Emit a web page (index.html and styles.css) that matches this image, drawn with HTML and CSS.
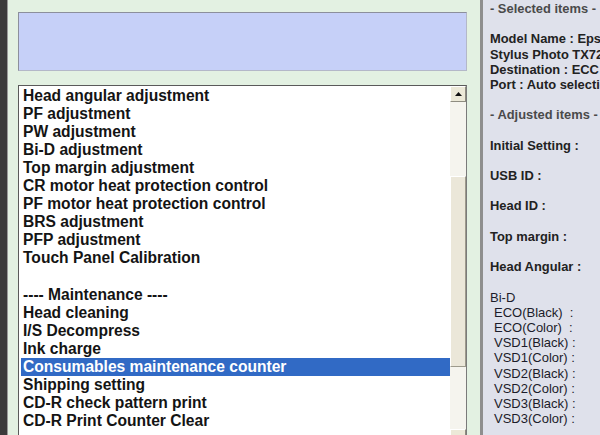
FILE: index.html
```html
<!DOCTYPE html>
<html lang="en">
<head>
    <meta charset="UTF-8">
    <title>Adjustment Program</title>
    <link rel="stylesheet" href="styles.css">
</head>
<body>

<div class="edge"></div>

<!-- Main area: message box + item list -->
<div class="main">
    <div class="message"></div>

    <div class="list">
        <ul class="items">
            <li>Head angular adjustment</li>
            <li>PF adjustment</li>
            <li>PW adjustment</li>
            <li>Bi-D adjustment</li>
            <li>Top margin adjustment</li>
            <li>CR motor heat protection control</li>
            <li>PF motor heat protection control</li>
            <li>BRS adjustment</li>
            <li>PFP adjustment</li>
            <li>Touch Panel Calibration</li>
            <li>&nbsp;</li>
            <li>---- Maintenance ----</li>
            <li>Head cleaning</li>
            <li>I/S Decompress</li>
            <li>Ink charge</li>
            <li class="selected">Consumables maintenance counter</li>
            <li>Shipping setting</li>
            <li>CD-R check pattern print</li>
            <li>CD-R Print Counter Clear</li>
        </ul>
        <div class="scrollbar">
            <div class="scroll-btn">
                <svg width="7" height="4" viewBox="0 0 7 4"><path d="M0 4 L3.5 0 L7 4 Z" fill="#111"/></svg>
            </div>
            <div class="track" style="height: 74px;"></div>
            <div class="thumb" style="height: 191px;"></div>
            <div class="track" style="height: 62px;"></div>
            <div class="scroll-btn"></div>
        </div>
    </div>
</div>

<!-- Right info panel -->
<div class="info">
    <p class="head">- Selected items -</p>
    <p class="gap">Model Name : Eps</p>
    <p>Stylus Photo TX72</p>
    <p>Destination : ECC</p>
    <p>Port : Auto selectio</p>

    <p class="head gap">- Adjusted items -</p>
    <p class="gap">Initial Setting :</p>
    <p class="gap">USB ID :</p>
    <p class="gap">Head ID :</p>
    <p class="gap">Top margin :</p>
    <p class="gap">Head Angular :</p>

    <p class="gap plain">Bi-D</p>
    <p class="plain sub">ECO(Black)&nbsp; :</p>
    <p class="plain sub">ECO(Color)&nbsp; :</p>
    <p class="plain sub">VSD1(Black) :</p>
    <p class="plain sub">VSD1(Color) :</p>
    <p class="plain sub">VSD2(Black) :</p>
    <p class="plain sub">VSD2(Color) :</p>
    <p class="plain sub">VSD3(Black) :</p>
    <p class="plain sub">VSD3(Color) :</p>
</div>

</body>
</html>
```

FILE: styles.css
```css
/* General */
* {
    margin: 0;
    padding: 0;
    box-sizing: border-box;
    font-family: "Liberation Sans", Arial, sans-serif;
}

body {
    width: 600px;
    height: 435px;
    overflow: hidden;
    display: flex;
    background: #e3f1e2;
}

ul {
    list-style: none;
}

/* Dark window edge on the left */
.edge {
    width: 8px;
    background: #3b3b3b;
    border-right: 1px solid #9a9a9a;
}

/* Main area */
.main {
    width: 472px;
    padding: 12px 13px 0 10px;
    background: #e3f1e2;
}

.message {
    height: 59px;
    background: #c6d0f8;
    border: 1px solid #b4b8c8;
    border-top-color: #8c8f9c;
    border-left-color: #8c8f9c;
}

.list {
    display: flex;
    height: 365px;
    margin-top: 14px;
    background: #fff;
    border: 1px solid #7a7a7a;
    border-top-color: #5a5a5a;
    border-left-color: #5a5a5a;
}

.items {
    flex: 1;
    padding: 1px 0 0 2px;
}

.items li {
    height: 18.05px;
    line-height: 18px;
    padding-left: 2px;
    font-size: 15.6px;
    font-weight: bold;
    color: #141414;
    white-space: nowrap;
}

.items li.selected {
    background: #316ac5;
    color: #fff;
}

/* Scrollbar */
.scrollbar {
    width: 16px;
    display: flex;
    flex-direction: column;
}

.scroll-btn {
    height: 16px;
    display: flex;
    align-items: center;
    justify-content: center;
    background: #ece9d8;
    border: 1px solid #fff;
    border-right-color: #8e8c80;
    border-bottom-color: #8e8c80;
}

.track {
    background: #f5f4ee;
}

.thumb {
    background: #ebe7d9;
    border: 1px solid #fff;
    border-right-color: #9d9a8c;
    border-bottom-color: #9d9a8c;
}

/* Right info panel */
.info {
    width: 120px;
    padding: 1px 0 0 7px;
    background: #dfe1eb;
    border-left: 3px solid #8e8e8e;
    overflow: hidden;
}

.info p {
    height: 15.2px;
    line-height: 15px;
    font-size: 12.9px;
    font-weight: bold;
    color: #222;
    white-space: nowrap;
}

.info p.head {
    color: #4a4a4a;
}

.info p.gap {
    margin-top: 15.2px;
}

.info p.plain {
    font-weight: normal;
    font-size: 13px;
    color: #1c1c2a;
}

.info p.sub {
    padding-left: 4px;
}
```
